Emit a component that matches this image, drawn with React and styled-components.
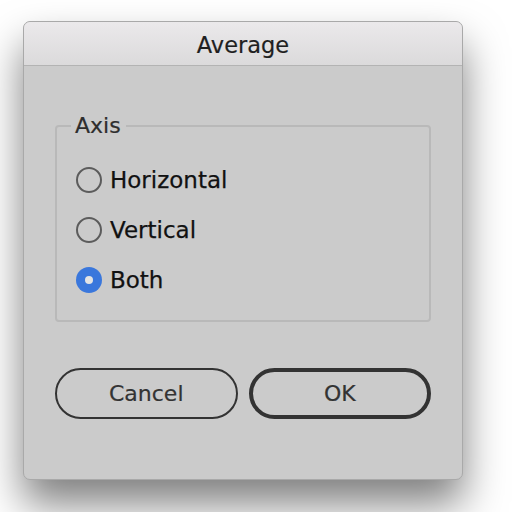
import React from "react";
import styled, { createGlobalStyle } from "styled-components";

const GlobalStyle = createGlobalStyle`
  html, body {
    margin: 0;
    background: #ffffff;
    font-family: "DejaVu Sans", "Liberation Sans", sans-serif;
  }
`;

const Page = styled.div`
  width: 512px;
  height: 512px;
  padding: 21px 0 0 23px;
  box-sizing: border-box;
  overflow: hidden;
`;

const Dialog = styled.div`
  width: 440px;
  height: 459px;
  box-sizing: border-box;
  border: 1px solid #a9a9a9;
  border-radius: 7px;
  background: #cbcbcb;
  box-shadow: 0 24px 42px rgba(0, 0, 0, 0.5);
  display: flex;
  flex-direction: column;
  overflow: hidden;
`;

const TitleBar = styled.div`
  height: 44px;
  flex: none;
  padding-top: 2px;
  box-sizing: border-box;
  display: flex;
  align-items: center;
  justify-content: center;
  background: linear-gradient(#ebe9eb, #dbdadb);
  border-bottom: 1px solid #b3b3b3;
  font-size: 22.5px;
  color: #1f1f1f;
  -webkit-text-stroke: 0.2px #1f1f1f;
`;

const Body = styled.div`
  flex: 1;
  padding: 47px 31px 0 31px;
  display: flex;
  flex-direction: column;
`;

const Group = styled.fieldset`
  margin: 0;
  padding: 16px 20px 15px 19px;
  border: 2px solid #b9b9b9;
  border-radius: 4px;
  display: flex;
  flex-direction: column;
`;

const Legend = styled.legend`
  margin-left: -5px;
  padding: 0 5px 0 4px;
  font-size: 22px;
  line-height: 26px;
  color: #2e2e2e;
  -webkit-text-stroke: 0.2px #2e2e2e;
`;

const Option = styled.label`
  height: 50px;
  display: flex;
  align-items: center;
  gap: 8px;
  font-size: 23px;
  color: #111;
  -webkit-text-stroke: 0.25px #111;
`;

const Radio = styled.span`
  width: 26px;
  height: 26px;
  box-sizing: border-box;
  border-radius: 50%;
  flex: none;
  display: flex;
  align-items: center;
  justify-content: center;
  border: ${(p) => (p.$checked ? "none" : "2px solid #5c5c5c")};
  background: ${(p) => (p.$checked ? "#3a77dc" : "transparent")};
  &::after {
    content: "";
    display: ${(p) => (p.$checked ? "block" : "none")};
    width: 8px;
    height: 8px;
    border-radius: 50%;
    background: #e4e4e4;
  }
`;

const Buttons = styled.div`
  margin-top: 46px;
  display: flex;
  gap: 11px;
`;

const Button = styled.button`
  width: 183px;
  height: 51px;
  box-sizing: border-box;
  border-radius: 26px;
  background: transparent;
  border: ${(p) => (p.$primary ? "4px" : "2px")} solid #333;
  font-family: inherit;
  font-size: 22px;
  color: #333;
  -webkit-text-stroke: 0.2px #333;
  padding: 0;
`;

const options = [
  { label: "Horizontal", checked: false },
  { label: "Vertical", checked: false },
  { label: "Both", checked: true },
];

export default function App() {
  return (
    <>
      <GlobalStyle />
      <Page>
        <Dialog>
          <TitleBar>Average</TitleBar>
          <Body>
            <Group>
              <Legend>Axis</Legend>
              {options.map((o) => (
                <Option key={o.label}>
                  <Radio $checked={o.checked} />
                  {o.label}
                </Option>
              ))}
            </Group>
            <Buttons>
              <Button>Cancel</Button>
              <Button $primary>OK</Button>
            </Buttons>
          </Body>
        </Dialog>
      </Page>
    </>
  );
}
